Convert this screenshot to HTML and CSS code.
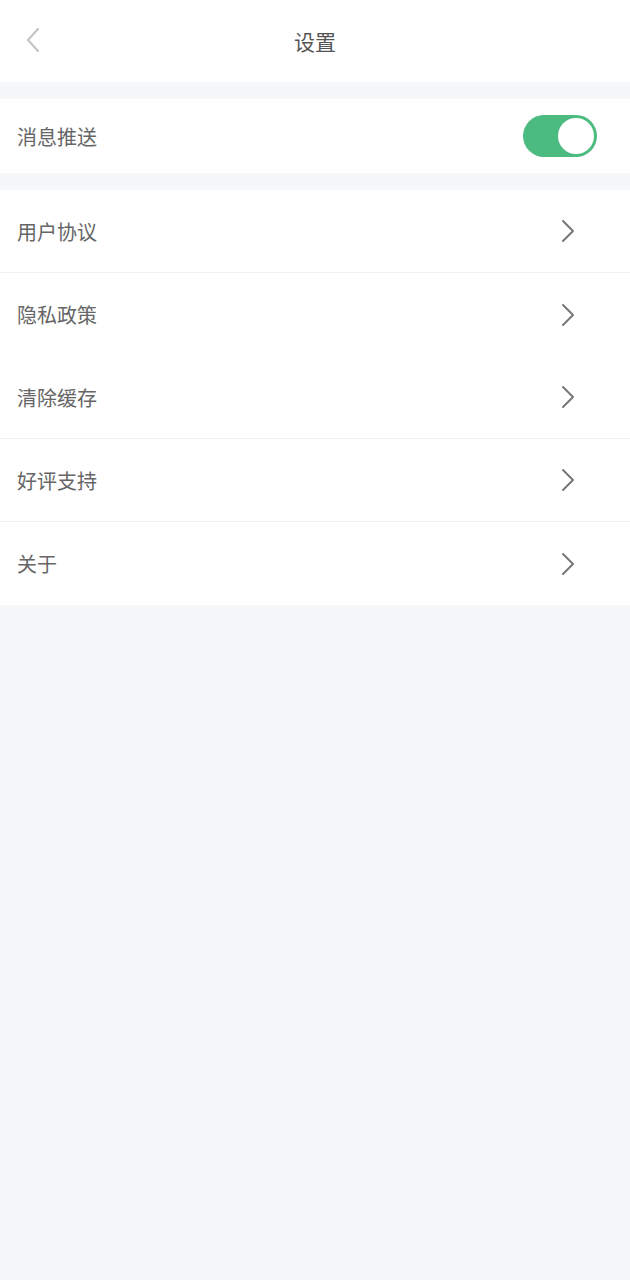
FILE: index.html
```html
<!DOCTYPE html>
<html lang="zh-CN">
<head>
  <meta charset="UTF-8">
  <meta name="viewport" content="width=device-width, initial-scale=1.0">
  <title>设置</title>
  <link rel="stylesheet" href="styles.css">
</head>
<body>
  <header class="nav">
    <span class="nav-back">
      <svg width="16" height="26" viewBox="0 0 16 26"><path d="M13 2 L3 13 L13 24" fill="none" stroke="#c4c4c4" stroke-width="2.2" stroke-linecap="round" stroke-linejoin="round"/></svg>
    </span>
    <h1 class="nav-title">设置</h1>
  </header>

  <section class="group">
    <div class="row row-push">
      <span class="row-label">消息推送</span>
      <span class="switch on"><span class="knob"></span></span>
    </div>
  </section>

  <section class="group">
    <div class="row line"><span class="row-label">用户协议</span><svg class="arrow" width="14" height="24" viewBox="0 0 14 24"><path d="M2 2 L12 12 L2 22" fill="none" stroke="#777" stroke-width="2" stroke-linecap="round" stroke-linejoin="round"/></svg></div>
    <div class="row"><span class="row-label">隐私政策</span><svg class="arrow" width="14" height="24" viewBox="0 0 14 24"><path d="M2 2 L12 12 L2 22" fill="none" stroke="#777" stroke-width="2" stroke-linecap="round" stroke-linejoin="round"/></svg></div>
    <div class="row line"><span class="row-label">清除缓存</span><svg class="arrow" width="14" height="24" viewBox="0 0 14 24"><path d="M2 2 L12 12 L2 22" fill="none" stroke="#777" stroke-width="2" stroke-linecap="round" stroke-linejoin="round"/></svg></div>
    <div class="row line"><span class="row-label">好评支持</span><svg class="arrow" width="14" height="24" viewBox="0 0 14 24"><path d="M2 2 L12 12 L2 22" fill="none" stroke="#777" stroke-width="2" stroke-linecap="round" stroke-linejoin="round"/></svg></div>
    <div class="row"><span class="row-label">关于</span><svg class="arrow" width="14" height="24" viewBox="0 0 14 24"><path d="M2 2 L12 12 L2 22" fill="none" stroke="#777" stroke-width="2" stroke-linecap="round" stroke-linejoin="round"/></svg></div>
  </section>
</body>
</html>
```

FILE: styles.css
```css
body {
  font-family: "Noto Sans CJK SC", "Noto Sans", sans-serif;
  margin: 0;
  min-height: 100vh;
  background-color: #f6f7f9;
  color: #666;
}
.nav {
  height: 82px;
  background: white;
  display: flex;
  align-items: center;
  justify-content: center;
  position: relative;
}
.nav-back {
  position: absolute;
  left: 25px;
  top: 27px;
  display: flex;
}
.nav-title {
  margin: 0;
  font-size: 21px;
  font-weight: 400;
  color: #555;
}
.group {
  background: white;
  margin-top: 17px;
}
.row {
  height: 83px;
  padding: 0 17px;
  display: flex;
  align-items: center;
  justify-content: space-between;
  box-sizing: border-box;
}
.row.line {
  border-bottom: 1px solid #f2f2f2;
}
.row-push {
  height: 74px;
  padding-right: 33px;
}
.row-label {
  font-size: 20px;
  color: #666;
}
.switch {
  width: 74px;
  height: 42px;
  border-radius: 21px;
  background: #d8d8d8;
  display: flex;
  align-items: center;
  padding: 0 3px;
  box-sizing: border-box;
}
.switch.on {
  background: #4cbb7f;
  justify-content: flex-end;
}
.knob {
  width: 36px;
  height: 36px;
  border-radius: 50%;
  background: white;
}
.arrow {
  margin-right: 38px;
}
```
